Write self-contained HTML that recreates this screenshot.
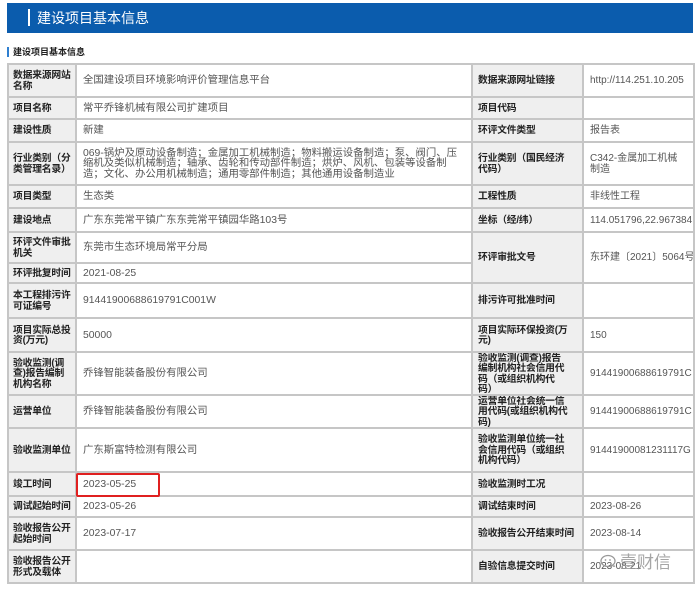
<!DOCTYPE html>
<html><head><meta charset="utf-8"><style>
*{margin:0;padding:0;box-sizing:border-box}
body{width:700px;height:589px;background:#fff;position:relative;overflow:hidden;font-family:"Liberation Sans","Noto Sans CJK SC",sans-serif}
.hd{position:absolute;left:7px;top:3px;width:686px;height:30px;background:#0b5cad}
.hd span{position:absolute;left:21px;top:6px;width:2px;height:17px;background:#fff}
.hd b{position:absolute;left:30px;top:6px;color:#fff;font-size:14px;font-weight:normal;line-height:18px}
.sub{position:absolute;left:7px;top:47px;width:2px;height:10px;background:#2f7fd0}
.subt{position:absolute;left:13px;top:46px;font-size:9px;font-weight:bold;color:#222;line-height:12px}
.grid{position:absolute;left:7px;top:63px;width:688px;height:521px;background:#c6c6c6}
.c{position:absolute;display:flex;align-items:center;font-size:10.4px;line-height:10.5px;background:#fff;color:#555;padding-left:6px;padding-top:2px;overflow:hidden}
.r{font-size:10px}
.l{background:#efefef;color:#222;font-weight:bold;padding-left:4px;padding-right:0;font-size:9.8px;letter-spacing:-0.2px}
.rl{padding-right:14px;padding-left:5px}
.red{position:absolute;left:76px;top:473px;width:84px;height:24px;border:2px solid #e02020;border-radius:2px}
.wm{position:absolute;left:600px;top:548px;font-size:17px;color:rgba(150,150,150,.85)}
</style></head><body>
<div class="hd"><span></span><b>建设项目基本信息</b></div>
<div class="sub"></div><div class="subt">建设项目基本信息</div>
<div class="grid"></div>

<div class="c l" style="left:9px;top:65px;width:66px;height:31px">数据来源网站名称</div>
<div class="c" style="left:77px;top:65px;width:394px;height:31px">全国建设项目环境影响评价管理信息平台</div>
<div class="c l rl" style="left:473px;top:65px;width:109px;height:31px">数据来源网址链接</div>
<div class="c r" style="left:584px;top:65px;width:109px;height:31px">http://114.251.10.205</div>

<div class="c l" style="left:9px;top:98px;width:66px;height:20px">项目名称</div>
<div class="c" style="left:77px;top:98px;width:394px;height:20px">常平乔锋机械有限公司扩建项目</div>
<div class="c l rl" style="left:473px;top:98px;width:109px;height:20px">项目代码</div>
<div class="c r" style="left:584px;top:98px;width:109px;height:20px"></div>

<div class="c l" style="left:9px;top:120px;width:66px;height:21px">建设性质</div>
<div class="c" style="left:77px;top:120px;width:394px;height:21px">新建</div>
<div class="c l rl" style="left:473px;top:120px;width:109px;height:21px">环评文件类型</div>
<div class="c r" style="left:584px;top:120px;width:109px;height:21px">报告表</div>

<div class="c l" style="left:9px;top:143px;width:66px;height:41px">行业类别（分类管理名录）</div>
<div class="c" style="left:77px;top:143px;width:394px;height:41px;padding-right:12px">069-锅炉及原动设备制造；金属加工机械制造；物料搬运设备制造；泵、阀门、压缩机及类似机械制造；轴承、齿轮和传动部件制造；烘炉、风机、包装等设备制造；文化、办公用机械制造；通用零部件制造；其他通用设备制造业</div>
<div class="c l rl" style="left:473px;top:143px;width:109px;height:41px">行业类别（国民经济代码）</div>
<div class="c r" style="left:584px;top:143px;width:109px;height:41px;padding-right:10px">C342-金属加工机械制造</div>

<div class="c l" style="left:9px;top:186px;width:66px;height:21px">项目类型</div>
<div class="c" style="left:77px;top:186px;width:394px;height:21px">生态类</div>
<div class="c l rl" style="left:473px;top:186px;width:109px;height:21px">工程性质</div>
<div class="c r" style="left:584px;top:186px;width:109px;height:21px">非线性工程</div>

<div class="c l" style="left:9px;top:209px;width:66px;height:22px">建设地点</div>
<div class="c" style="left:77px;top:209px;width:394px;height:22px">广东东莞常平镇广东东莞常平镇园华路103号</div>
<div class="c l rl" style="left:473px;top:209px;width:109px;height:22px">坐标（经/纬）</div>
<div class="c r" style="left:584px;top:209px;width:109px;height:22px;white-space:nowrap">114.051796,22.967384</div>

<div class="c l" style="left:9px;top:233px;width:66px;height:29px">环评文件审批机关</div>
<div class="c" style="left:77px;top:233px;width:394px;height:29px">东莞市生态环境局常平分局</div>
<div class="c l rl" style="left:473px;top:233px;width:109px;height:49px">环评审批文号</div>
<div class="c r" style="left:584px;top:233px;width:109px;height:49px;white-space:nowrap">东环建〔2021〕5064号</div>
<div class="c l" style="left:9px;top:264px;width:66px;height:18px;white-space:nowrap">环评批复时间</div>
<div class="c" style="left:77px;top:264px;width:394px;height:18px">2021-08-25</div>

<div class="c l" style="left:9px;top:284px;width:66px;height:33px">本工程排污许可证编号</div>
<div class="c" style="left:77px;top:284px;width:394px;height:33px">91441900688619791C001W</div>
<div class="c l rl" style="left:473px;top:284px;width:109px;height:33px">排污许可批准时间</div>
<div class="c r" style="left:584px;top:284px;width:109px;height:33px"></div>

<div class="c l" style="left:9px;top:319px;width:66px;height:32px">项目实际总投资(万元)</div>
<div class="c" style="left:77px;top:319px;width:394px;height:32px">50000</div>
<div class="c l rl" style="left:473px;top:319px;width:109px;height:32px">项目实际环保投资(万元)</div>
<div class="c r" style="left:584px;top:319px;width:109px;height:32px">150</div>

<div class="c l" style="left:9px;top:353px;width:66px;height:41px;padding-right:8px">验收监测(调查)报告编制机构名称</div>
<div class="c" style="left:77px;top:353px;width:394px;height:41px">乔锋智能装备股份有限公司</div>
<div class="c l rl" style="left:473px;top:353px;width:109px;height:41px">验收监测(调查)报告编制机构社会信用代码（或组织机构代码）</div>
<div class="c r" style="left:584px;top:353px;width:109px;height:41px;white-space:nowrap">91441900688619791C</div>

<div class="c l" style="left:9px;top:396px;width:66px;height:31px">运营单位</div>
<div class="c" style="left:77px;top:396px;width:394px;height:31px">乔锋智能装备股份有限公司</div>
<div class="c l rl" style="left:473px;top:396px;width:109px;height:31px">运营单位社会统一信用代码(或组织机构代码)</div>
<div class="c r" style="left:584px;top:396px;width:109px;height:31px;white-space:nowrap">91441900688619791C</div>

<div class="c l" style="left:9px;top:429px;width:66px;height:42px;white-space:nowrap">验收监测单位</div>
<div class="c" style="left:77px;top:429px;width:394px;height:42px">广东斯富特检测有限公司</div>
<div class="c l rl" style="left:473px;top:429px;width:109px;height:42px">验收监测单位统一社会信用代码（或组织机构代码）</div>
<div class="c r" style="left:584px;top:429px;width:109px;height:42px;white-space:nowrap">91441900081231117G</div>

<div class="c l" style="left:9px;top:473px;width:66px;height:22px">竣工时间</div>
<div class="c" style="left:77px;top:473px;width:394px;height:22px">2023-05-25</div>
<div class="c l rl" style="left:473px;top:473px;width:109px;height:22px">验收监测时工况</div>
<div class="c r" style="left:584px;top:473px;width:109px;height:22px"></div>

<div class="c l" style="left:9px;top:497px;width:66px;height:19px;white-space:nowrap">调试起始时间</div>
<div class="c" style="left:77px;top:497px;width:394px;height:19px">2023-05-26</div>
<div class="c l rl" style="left:473px;top:497px;width:109px;height:19px">调试结束时间</div>
<div class="c r" style="left:584px;top:497px;width:109px;height:19px">2023-08-26</div>

<div class="c l" style="left:9px;top:518px;width:66px;height:31px">验收报告公开起始时间</div>
<div class="c" style="left:77px;top:518px;width:394px;height:31px">2023-07-17</div>
<div class="c l" style="left:473px;top:518px;width:109px;height:31px;padding-left:5px;white-space:nowrap">验收报告公开结束时间</div>
<div class="c r" style="left:584px;top:518px;width:109px;height:31px">2023-08-14</div>

<div class="c l" style="left:9px;top:551px;width:66px;height:31px">验收报告公开形式及载体</div>
<div class="c" style="left:77px;top:551px;width:394px;height:31px"></div>
<div class="c l rl" style="left:473px;top:551px;width:109px;height:31px">自验信息提交时间</div>
<div class="c r" style="left:584px;top:551px;width:109px;height:31px">2023-08-21</div>

<div class="red"></div>
<div class="wm"><svg width="20" height="16" viewBox="0 0 20 16" style="vertical-align:-2px"><ellipse cx="8" cy="7" rx="7" ry="5.5" fill="none" stroke="#999" stroke-width="1.3"/><circle cx="5.5" cy="6" r="0.9" fill="#999"/><circle cx="10" cy="6" r="0.9" fill="#999"/></svg>壹财信</div>
</body></html>
